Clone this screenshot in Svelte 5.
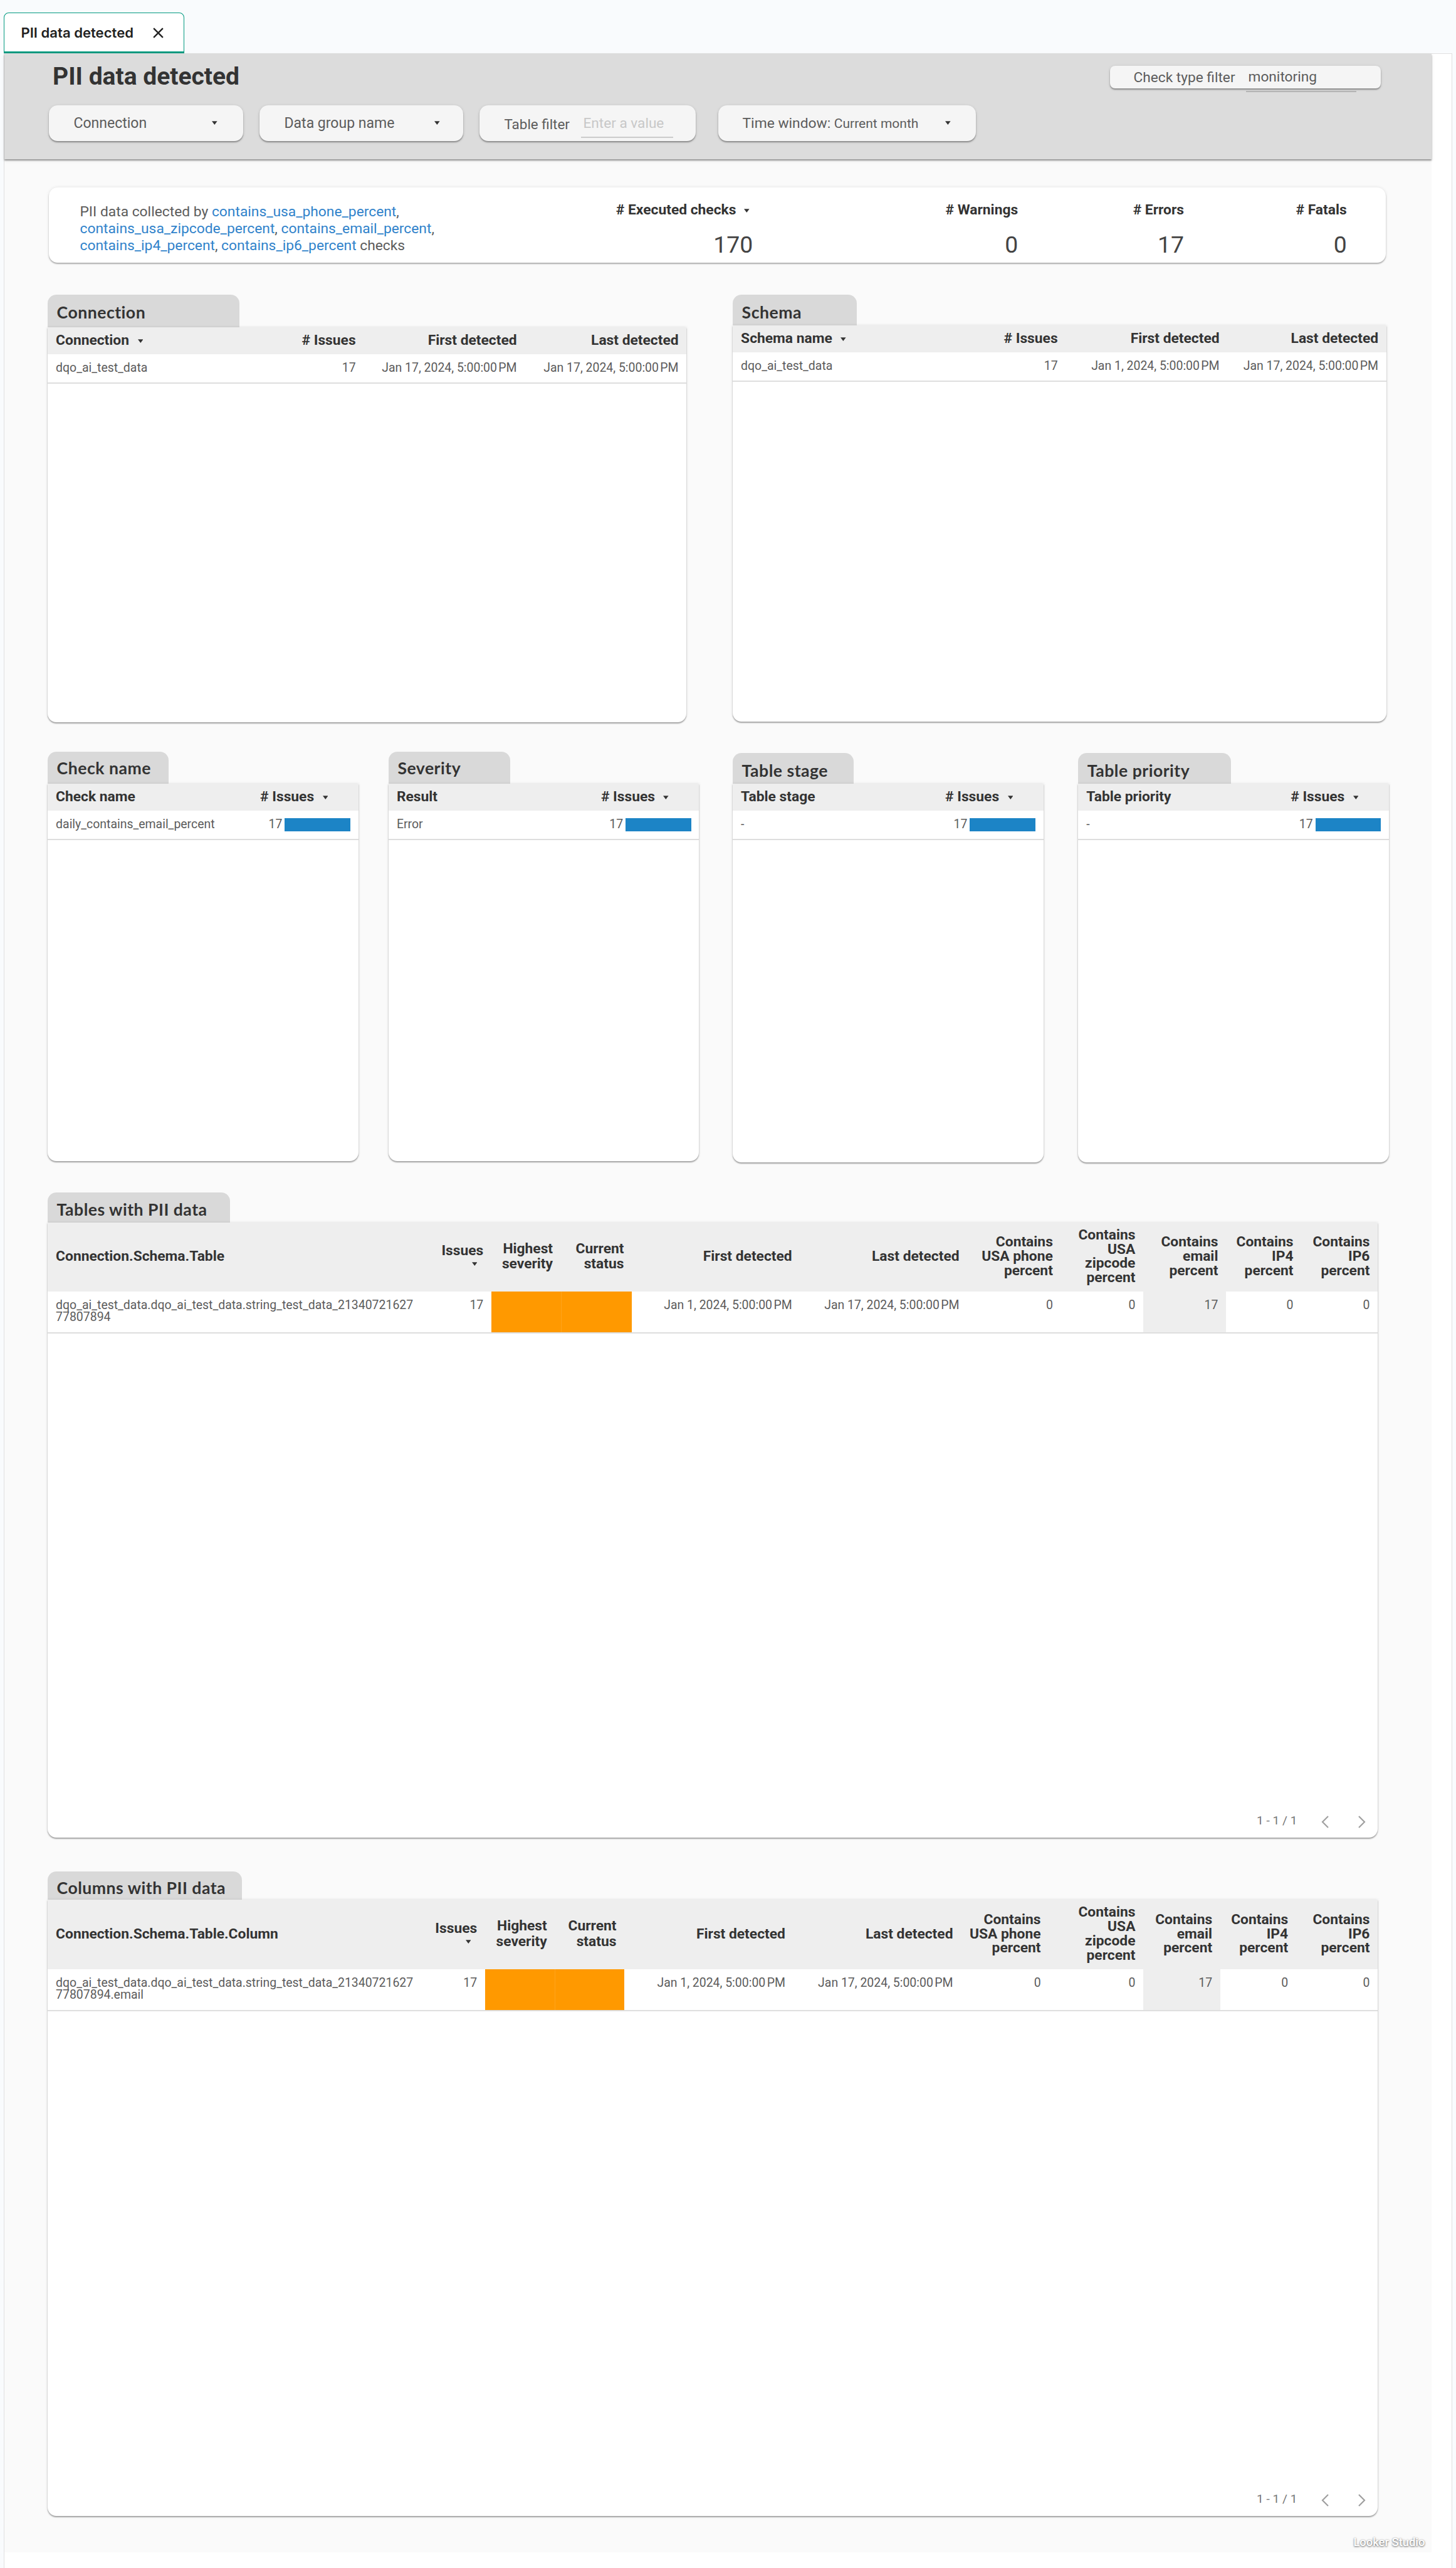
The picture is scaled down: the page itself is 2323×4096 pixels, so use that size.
<script>
  // Open tab of the dashboards view
  let activeTab = 'PII data detected';

  let metrics = [
    { label: '# Executed checks', value: 170, width: 301.5, sorted: true },
    { label: '# Warnings', value: 0, width: 422.8 },
    { label: '# Errors', value: 17, width: 264.8 },
    { label: '# Fatals', value: 0, width: 259.7 }
  ];

  const jan1 = 'Jan 1, 2024, 5:00:00\u202fPM';
  const jan17 = 'Jan 17, 2024, 5:00:00\u202fPM';

  // Issues grouped by connection and schema
  let sources = [
    {
      title: 'Connection',
      tab: { width: 305.6, height: 52.6, pad: 13.5 },
      height: 630,
      columns: [
        { label: 'Connection', width: 350, left: true, sorted: true },
        { label: '# Issues', width: 154 },
        { label: 'First detected', width: 257 },
        { label: 'Last detected', width: 258 }
      ],
      row: ['dqo_ai_test_data', 17, jan17, jan17]
    },
    {
      title: 'Schema',
      tab: { width: 198, height: 49.6, pad: 13.5 },
      height: 631.2,
      columns: [
        { label: 'Schema name', width: 372, left: true, sorted: true },
        { label: '# Issues', width: 159 },
        { label: 'First detected', width: 258 },
        { label: 'Last detected', width: 253.5 }
      ],
      row: ['dqo_ai_test_data', 17, jan1, jan17]
    }
  ];

  function issuesPanel(title, label, value, tab, height, offset) {
    return {
      title,
      tab,
      height,
      offset,
      columns: [
        { label, width: 328, left: true },
        { label: '# Issues', width: 167.6, left: true, sorted: true, bar: true }
      ],
      row: [value, 17]
    };
  }

  let breakdowns = [
    issuesPanel('Check name', 'Check name', 'daily_contains_email_percent', { width: 192.6, height: 51, pad: 10.6 }, 601.5, 0),
    issuesPanel('Severity', 'Result', 'Error', { width: 194, height: 51, pad: 10.6 }, 601.5, 0),
    issuesPanel('Table stage', 'Table stage', '-', { width: 193.4, height: 49.1, pad: 12.2 }, 604, 1.9),
    issuesPanel('Table priority', 'Table priority', '-', { width: 243.3, height: 49.1, pad: 12.2 }, 604, 1.9)
  ];

  const detailLabels = [
    'Issues',
    'Highest\nseverity',
    'Current\nstatus',
    'First detected',
    'Last detected',
    'Contains\nUSA phone\npercent',
    'Contains\nUSA\nzipcode\npercent',
    'Contains\nemail\npercent',
    'Contains\nIP4\npercent',
    'Contains\nIP6\npercent'
  ];

  function detailPanel(title, first, name, widths, tab, height) {
    return {
      title,
      tab,
      height,
      detail: true,
      columns: [
        { label: first, width: 606, left: true },
        ...detailLabels.map((label, i) => ({
          label,
          width: widths[i],
          sorted: i === 0,
          severity: i === 1 || i === 2,
          shaded: i === 7
        }))
      ],
      row: [name, 17, '', '', jan1, jan17, 0, 0, 17, 0, 0]
    };
  }

  let tables = detailPanel(
    'Tables with PII data',
    'Connection.Schema.Table',
    'dqo_ai_test_data.dqo_ai_test_data.string_test_data_21340721627\n77807894',
    [101.7, 110.8, 113.4, 268.2, 266.9, 149.3, 131.6, 132, 120.1, 121.9],
    { width: 290.8, height: 47.1, pad: 11.2 },
    981.6
  );

  let columns = detailPanel(
    'Columns with PII data',
    'Connection.Schema.Table.Column',
    'dqo_ai_test_data.dqo_ai_test_data.string_test_data_21340721627\n77807894.email',
    [91.6, 111.5, 110.8, 269.4, 267.6, 140.1, 150.9, 122.7, 121, 130.3],
    { width: 310.4, height: 45.4, pad: 11.4 },
    983.1
  );

  const template = (cols) => cols.map((c) => c.width + 'px').join(' ');
  const total = (cols) => cols.reduce((sum, c) => sum + c.width, 0);
  const lines = (label) => label.split('\n').length;
</script>

{#snippet caret()}
  <svg class="caret" viewBox="0 0 9 6"><path d="M0 0h9L4.5 6z" /></svg>
{/snippet}

{#snippet panel(p)}
  <section class="panel" style="width: {total(p.columns)}px; padding-top: {p.offset || 0}px">
    <h2 style="width: {p.tab.width}px; height: {p.tab.height}px; padding-top: {p.tab.pad}px">{p.title}</h2>
    <div class="card" style="height: {p.height}px">
      <div class="table-head" class:tall={p.detail} style="grid-template-columns: {template(p.columns)}">
        {#each p.columns as col}
          <div class="th" class:left={col.left} class:bar-head={col.bar} class:two={lines(col.label) === 2} class:stacked={p.detail && col.sorted}>
            <span>{col.label}</span>
            {#if col.sorted}{@render caret()}{/if}
          </div>
        {/each}
      </div>
      <div class="table-row" class:tall={p.detail} style="grid-template-columns: {template(p.columns)}">
        {#each p.columns as col, i}
          <div
            class="td"
            class:left={col.left && !col.bar}
            class:severity={col.severity}
            class:shaded={col.shaded}
          >
            <span>{p.row[i]}</span>
            {#if col.bar}<i class="bar"></i>{/if}
          </div>
        {/each}
      </div>
      {#if p.detail}
        <div class="pager">
          <span>1 - 1 / 1</span>
          <svg viewBox="0 0 12 20"><path d="M11 1L2 10l9 9" /></svg>
          <svg viewBox="0 0 12 20"><path d="M1 1l9 9-9 9" /></svg>
        </div>
      {/if}
    </div>
  </section>
{/snippet}

<div class="app">
  <nav class="tabs">
    <div class="tab">
      <span>{activeTab}</span>
      <svg viewBox="0 0 18 18"><path d="M2 2l14 14M16 2L2 16" /></svg>
    </div>
  </nav>

  <div class="frame">
    <main class="report">
      <!-- Report header with filters -->
      <header>
        <div class="title-row">
          <h1>PII data detected</h1>
          <div class="pill check-type">
            <span>Check type filter</span>
            <span class="check-value">monitoring</span>
          </div>
        </div>
        <div class="filters">
          <div class="pill connection"><span>Connection</span>{@render caret()}</div>
          <div class="pill group"><span>Data group name</span>{@render caret()}</div>
          <div class="pill table-filter">
            <span>Table filter</span>
            <span class="field">Enter a value</span>
          </div>
          <div class="pill window">
            <span>Time window: <small>Current month</small></span>{@render caret()}
          </div>
        </div>
      </header>

      <div class="content">
        <section class="summary">
          <p>
            PII data collected by <a href="#phone">contains_usa_phone_percent</a>,<br />
            <a href="#zipcode">contains_usa_zipcode_percent</a>, <a href="#email">contains_email_percent</a>,<br />
            <a href="#ip4">contains_ip4_percent</a>, <a href="#ip6">contains_ip6_percent</a> checks
          </p>
          {#each metrics as metric}
            <div class="metric" style="width: {metric.width}px">
              <div class="metric-label" class:sorted={metric.sorted}>
                {metric.label}
                {#if metric.sorted}{@render caret()}{/if}
              </div>
              <div class="metric-value">{metric.value}</div>
            </div>
          {/each}
        </section>

        <div class="sources">
          {#each sources as p}{@render panel(p)}{/each}
        </div>
        <div class="breakdowns">
          {#each breakdowns as p}{@render panel(p)}{/each}
        </div>
        <div class="tables">{@render panel(tables)}</div>
        <div class="columns">{@render panel(columns)}</div>
      </div>

      <footer>Looker Studio</footer>
    </main>
  </div>
</div>

<style>
  :global(body) {
    background: #f9fbfd;
  }

  * {
    box-sizing: border-box;
  }

  .app {
    height: 4096px;
    overflow: hidden;
    font-family: Roboto, sans-serif;
    font-size: 22.8px;
    color: #5c5c5c;
  }

  h1,
  h2,
  p {
    margin: 0;
  }

  /* Tab strip */
  .tabs {
    height: 84.6px;
    padding: 19.6px 0 0 6px;
  }

  .tab {
    display: flex;
    align-items: center;
    justify-content: space-between;
    width: 288px;
    height: 65px;
    padding: 2px 31px 0 26.5px;
    border: 1.5px solid #029a80;
    border-bottom-width: 3.4px;
    border-radius: 8px 8px 0 0;
    background: #fff;
    color: #222;
    font: 600 22.1px Inter, sans-serif;
  }

  .tab svg {
    width: 19px;
    height: 19px;
    fill: none;
    stroke: #222;
    stroke-width: 2.2;
  }

  /* Embedded report */
  .frame {
    width: 2311px;
    height: 4012px;
    margin-left: 6px;
    border: 1.5px solid #e0e0e0;
    border-bottom: 0;
    background: #fff;
  }

  .report {
    width: 2276.5px;
    height: 3985.4px;
    background: #fafafa;
  }

  header {
    height: 168.6px;
    padding-left: 70.5px;
    background: #dcdcdc;
    box-shadow: 0 2px 2px rgba(0, 0, 0, 0.35), 0 2px 5px rgba(0, 0, 0, 0.12);
  }

  .title-row {
    display: flex;
    justify-content: space-between;
    height: 82.2px;
    padding: 11.8px 81px 0 6.5px;
  }

  h1 {
    color: #333;
    font-size: 39px;
    font-weight: 700;
    line-height: 50px;
  }

  .pill {
    display: flex;
    align-items: center;
    justify-content: space-between;
    height: 57.5px;
    padding: 0 40px;
    border-radius: 14px;
    background: #f5f5f5;
    box-shadow: 0 2px 2px rgba(0, 0, 0, 0.32), 0 1px 5px rgba(0, 0, 0, 0.12);
    white-space: nowrap;
    font-size: 23px;
    line-height: 30px;
  }

  .check-type {
    position: relative;
    justify-content: flex-start;
    width: 432px;
    height: 36.3px;
    margin-top: 7.4px;
    padding: 3px 0 0 38px;
    border-radius: 8px;
    font-size: 22.7px;
  }

  .check-value {
    position: absolute;
    left: 217px;
    top: 3px;
    width: 176px;
    height: 38.8px;
    padding-left: 4px;
    border-bottom: 2.2px solid #b4b4b4;
  }

  .filters {
    display: flex;
    gap: 26px;
  }

  .connection {
    width: 310px;
    padding-right: 41px;
  }

  .group {
    width: 325px;
    padding-right: 37px;
  }

  .table-filter {
    width: 345.5px;
    padding-top: 2px;
    padding-right: 36px;
    font-size: 22.4px;
  }

  .field {
    align-self: flex-end;
    width: 147px;
    height: 38px;
    margin-bottom: 5px;
    padding-left: 3.5px;
    border-bottom: 2.2px solid #ccc;
    color: #c8c8c8;
    font-size: 22.6px;
  }

  .window {
    width: 411.5px;
    margin-left: 9.5px;
    padding-left: 39px;
    font-size: 22.8px;
  }

  small {
    font-size: 21px;
  }

  .caret {
    flex: none;
    width: 8.6px;
    height: 6.2px;
    fill: #333;
  }

  .content {
    width: 2200px;
    margin-left: 69.1px;
  }

  /* Totals */
  .summary {
    display: flex;
    width: 2133px;
    height: 119.8px;
    margin: 45.3px 0 50.6px 2.4px;
    padding-left: 49px;
    border-radius: 14px;
    background: #fff;
    box-shadow: 0 2px 2px rgba(0, 0, 0, 0.28), 0 0 5px rgba(0, 0, 0, 0.1);
    white-space: nowrap;
  }

  .summary p {
    width: 772.4px;
    padding-top: 24.1px;
    line-height: 27px;
  }

  .summary a {
    color: #3183cb;
    text-decoration: none;
  }

  .metric {
    color: #333;
    text-align: right;
  }

  .metric-label {
    padding-top: 21px;
    font-size: 22.8px;
    font-weight: 700;
    line-height: 30px;
  }

  .metric-label.sorted {
    padding-right: 5.7px;
  }

  .metric-label .caret {
    margin: 0 0 3px 7px;
  }

  .metric-value {
    margin-top: 20px;
    color: #444;
    font-size: 37.4px;
    line-height: 40px;
  }

  /* Panels */
  .sources {
    display: grid;
    grid-template-columns: 1093px 1042.5px;
    height: 729.6px;
  }

  .breakdowns {
    display: grid;
    grid-template-columns: 543.8px 549.2px 551.2px 495.6px;
    height: 703px;
  }

  .tables {
    height: 1082.4px;
  }

  h2 {
    padding-left: 14.5px;
    border-radius: 14px 14px 0 0;
    background: #d9d9d9;
    color: #333;
    font: 700 26.6px/30px Lato, sans-serif;
    letter-spacing: 0.5px;
  }

  .card {
    position: relative;
    border-radius: 0 0 14px 14px;
    background: #fff;
    box-shadow: 0 2px 2px rgba(0, 0, 0, 0.32), 0 0 4px rgba(0, 0, 0, 0.12);
  }

  .table-head,
  .table-row {
    display: grid;
    white-space: pre;
  }

  .table-head {
    height: 42.6px;
    background: #eee;
    color: #333;
    font-weight: 700;
    line-height: 22.8px;
  }

  .table-head.tall {
    height: 110.3px;
  }

  .th {
    display: flex;
    align-items: center;
    justify-content: flex-end;
    padding: 0 12.5px 0.8px 13px;
    text-align: right;
  }

  .th.left {
    justify-content: flex-start;
    text-align: left;
  }

  .th .caret {
    margin: 2px 0 0 13.5px;
  }

  .th.bar-head {
    padding-left: 11px;
  }

  .th.two {
    line-height: 24.6px;
  }

  .th.stacked {
    flex-direction: column;
    justify-content: center;
    align-items: flex-end;
    padding-bottom: 6px;
  }

  .th.stacked .caret {
    margin: 6px 10px 0 0;
  }

  .table-row {
    height: 47.2px;
    border-bottom: 2px solid #dedede;
    font-size: 19.45px;
    line-height: 19.2px;
  }

  .table-row.tall {
    height: 67.3px;
  }

  .td {
    display: flex;
    justify-content: flex-end;
    padding: 12.2px 12.5px 0 13px;
  }

  .td.left {
    justify-content: flex-start;
  }

  .severity {
    background: #ff9900;
  }

  .shaded {
    background: #eee;
  }

  .severity + .severity {
    border-left: 1px solid #ffa41c;
  }

  .bar {
    width: 104.8px;
    height: 20.8px;
    margin-left: 4px;
    background: #1c84c6;
  }

  .pager {
    position: absolute;
    right: 18.5px;
    bottom: 11px;
    display: flex;
    align-items: center;
    color: #757575;
    font-size: 19.2px;
    line-height: 26px;
  }

  .pager span {
    padding-bottom: 3px;
  }

  .pager svg {
    width: 12px;
    height: 20px;
    margin-left: 39px;
    fill: none;
    stroke: #a0a0a0;
    stroke-width: 2.2;
  }

  .pager svg:last-child {
    margin-left: 47px;
  }

  footer {
    width: 2266.5px;
    margin-top: 31.5px;
    color: #fff;
    text-align: right;
    font-size: 18.4px;
    font-weight: 500;
    line-height: 20px;
    text-shadow: 0 1px 3px rgba(0, 0, 0, 0.6), 0 0 2px rgba(0, 0, 0, 0.2);
  }
</style>
